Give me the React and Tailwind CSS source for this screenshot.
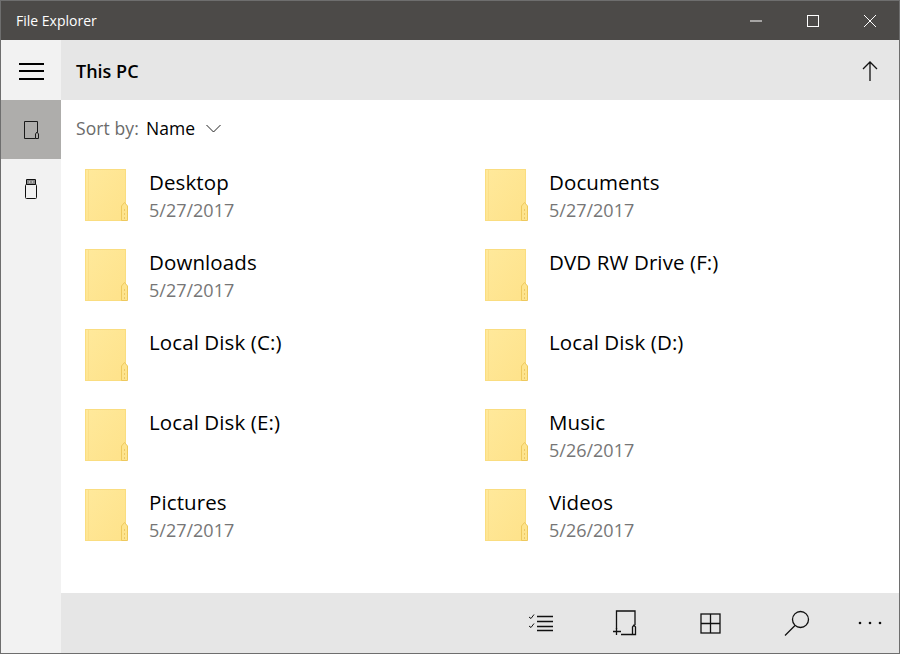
import React from 'react';

const font = { fontFamily: '"Open Sans", "Noto Sans", sans-serif' };

const items = [
    { name: 'Desktop', date: '5/27/2017' },
    { name: 'Documents', date: '5/27/2017' },
    { name: 'Downloads', date: '5/27/2017' },
    { name: 'DVD RW Drive (F:)' },
    { name: 'Local Disk (C:)' },
    { name: 'Local Disk (D:)' },
    { name: 'Local Disk (E:)' },
    { name: 'Music', date: '5/26/2017' },
    { name: 'Pictures', date: '5/27/2017' },
    { name: 'Videos', date: '5/26/2017' },
];

function Folder() {
    return (
        <svg width="44" height="52" viewBox="0 0 44 52" className="shrink-0">
            <defs>
                <linearGradient id="folderFill" x1="0" y1="0" x2="1" y2="1">
                    <stop offset="0" stopColor="#ffe99b" />
                    <stop offset="1" stopColor="#fee28a" />
                </linearGradient>
            </defs>
            <rect x="0.5" y="0.5" width="40" height="51" fill="url(#folderFill)" stroke="#fadd80" />
            <path d="M3.5 1V51" stroke="#fcdf88" />
            <path d="M36.5 51.5V37L39.5 33.5L42.5 37V51.5Z" fill="#fee48e" stroke="#eec95e" />
            <path d="M39 41h1M39 45h1M39 49h1" stroke="#d8ae48" />
        </svg>
    );
}

export default function App() {
    return (
        <div className="flex h-[654px] w-[900px] flex-col overflow-hidden border border-[#6e6e6e] bg-white" style={font}>
            <div className="flex h-[39px] shrink-0 items-center justify-between bg-[#4c4a48] pl-[15px] text-white">
                <span className="text-[14px]">File Explorer</span>
                <div className="flex h-full">
                    <button className="flex h-full w-[57px] items-center justify-center">
                        <svg width="12" height="2" viewBox="0 0 12 2" fill="#fff"><rect width="12" height="1" y="0.5" /></svg>
                    </button>
                    <button className="flex h-full w-[57px] items-center justify-center">
                        <svg width="12" height="12" viewBox="0 0 12 12" fill="none" stroke="#fff"><rect x="0.5" y="0.5" width="11" height="11" /></svg>
                    </button>
                    <button className="flex h-full w-[58px] items-center justify-center">
                        <svg width="12" height="12" viewBox="0 0 12 12" fill="none" stroke="#fff"><path d="M0 0l12 12M12 0L0 12" /></svg>
                    </button>
                </div>
            </div>

            <div className="flex min-h-0 flex-1">
                {/* nav rail */}
                <div className="flex w-[60px] shrink-0 flex-col bg-[#f2f2f2]">
                    <button className="flex h-[60px] items-center justify-center pt-[3px]">
                        <svg width="25" height="17" viewBox="0 0 25 17" stroke="#000" strokeWidth="2"><path d="M0 1h25M0 8h25M0 16h25" /></svg>
                    </button>
                    <button className="flex h-[59px] items-center justify-center bg-[#aeadab]">
                        <svg width="15" height="18" viewBox="0 0 15 18" fill="none" stroke="#1a1a1a">
                            <path d="M11.5 17.5H0.5V0.5H13.5V11" />
                            <path d="M11.5 17.5V13L13 11L14.5 13V17.5Z" />
                        </svg>
                    </button>
                    <button className="flex h-[60px] items-center justify-center">
                        <svg width="12" height="20" viewBox="0 0 12 20" fill="none" stroke="#111">
                            <path d="M1.5 5.5V0.5H10.5V5.5" />
                            <path d="M2 1h8v4.5H2z" fill="#8a8a8a" stroke="none" />
                            <path d="M4 3h1M7 3h1" stroke="#eee" />
                            <rect x="0.5" y="5.5" width="11" height="14" rx="1" />
                        </svg>
                    </button>
                </div>

                <div className="flex min-w-0 flex-1 flex-col">
                    <div className="flex h-[60px] shrink-0 items-center justify-between bg-[#e6e6e6] pl-[15px] pr-[21px]">
                        <span className="text-[18px] font-semibold leading-[26px] text-black translate-y-[1px]">This PC</span>
                        <svg width="16" height="20" viewBox="0 0 16 20" fill="none" stroke="#111" strokeWidth="1.3" className="translate-y-[1px]"><path d="M8 20V1M1 8l7-7 7 7" /></svg>
                    </div>

                    <div className="flex-1 overflow-hidden">
                        <div className="flex h-[56px] items-center pl-[15px] text-[17.5px] tracking-[0.1px]">
                            <span className="text-[#6b6b6b]">Sort by:</span>
                            <span className="ml-[7px] text-black">Name</span>
                            <svg className="ml-[11px]" width="15" height="9" viewBox="0 0 15 9" fill="none" stroke="#222"><path d="M0.5 1l7 7 7-7" /></svg>
                        </div>
                        <div className="mt-[4px] grid grid-cols-[400px_400px]">
                            {items.map((item) => (
                                <div key={item.name} className="flex h-[80px] items-start pl-[24px] pt-[9px]">
                                    <Folder />
                                    <div className="ml-[20px] leading-none">
                                        <p className="mt-[1px] text-[20.5px] leading-[24px] tracking-[0.1px] text-black">{item.name}</p>
                                        {item.date && <p className="mt-[4px] text-[18px] leading-[24px] text-[#767676]">{item.date}</p>}
                                    </div>
                                </div>
                            ))}
                        </div>
                    </div>

                    <div className="flex h-[60px] shrink-0 items-center justify-end bg-[#e6e6e6]">
                        <button className="flex w-[84px] justify-center">
                            <svg width="26" height="18" viewBox="0 0 26 18" fill="none" stroke="#111" strokeWidth="1.3">
                                <path d="M1 3l2 1.5 3-4M1 12l2 1.5 3-4" strokeWidth="1" />
                                <path d="M9 2.5h16M9 7.5h16M9 12.5h16M9 16.5h16" />
                            </svg>
                        </button>
                        <button className="flex w-[84px] justify-center">
                            <svg width="24" height="26" viewBox="0 0 24 26" fill="none" stroke="#111" strokeWidth="1.3">
                                <path d="M3.5 19V1H22V15M8 24.5H19" />
                                <path d="M19.5 24.5V17L21 15L22.5 17V24.5Z" />
                                <path d="M0 21.5h8M3.5 18v7" />
                            </svg>
                        </button>
                        <button className="flex w-[86px] justify-center">
                            <svg width="21" height="21" viewBox="0 0 21 21" fill="none" stroke="#111" strokeWidth="1.3"><rect x="1" y="1" width="19" height="19" /><path d="M10.5 1v19M1 10.5h19" /></svg>
                        </button>
                        <button className="flex w-[88px] justify-center">
                            <svg width="26" height="26" viewBox="0 0 26 26" fill="none" stroke="#111" strokeWidth="1.3"><circle cx="16.5" cy="9.5" r="8" /><path d="M11 15.5L1 25.5" /></svg>
                        </button>
                        <button className="flex w-[58px] justify-center">
                            <svg width="24" height="4" viewBox="0 0 24 4" fill="#111"><circle cx="2" cy="2" r="1.3" /><circle cx="12" cy="2" r="1.3" /><circle cx="22" cy="2" r="1.3" /></svg>
                        </button>
                    </div>
                </div>
            </div>
        </div>
    );
}
